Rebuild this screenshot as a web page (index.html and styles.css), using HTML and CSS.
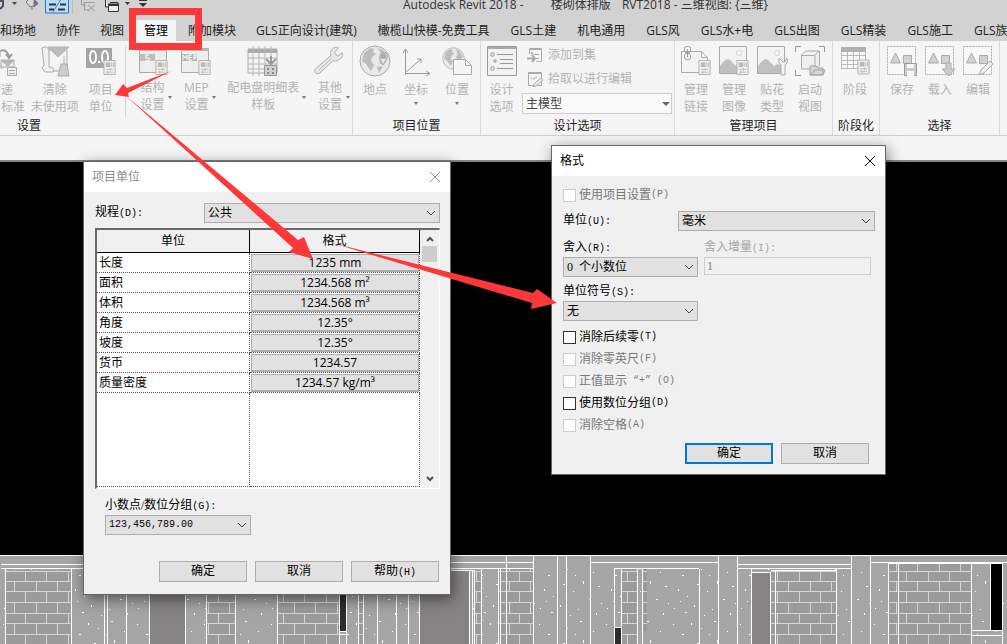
FILE: index.html
```html
<!DOCTYPE html>
<html lang="zh-CN">
<head>
<meta charset="utf-8">
<title>Autodesk Revit 2018</title>
<link rel="stylesheet" href="styles.css">
</head>
<body>
<svg class="defs" aria-hidden="true">
  <defs>
    <symbol id="card" viewBox="0 0 14 17">
      <path d="M1 1h12v15H1z" fill="#f3f3f3" stroke="#ababab"/>
      <path d="M3 3h5v5H3z" fill="#b9b9b9"/><path d="M9.500 3v5M11.500 3v5M3 10.500h8M3 13.500h8M8 9v3M5 12v3" stroke="#b5b5b5" fill="none"/>
    </symbol>
    <symbol id="sel" viewBox="0 0 32 32">
      <path d="M1.500 1.500h28v28h-28z" fill="#f8f8f8" stroke="#aaa" stroke-dasharray="2 1"/>
      <path d="M9.500 8l5 10h-10z" fill="#d2d2d2" stroke="#aaa"/><path d="M17.500 10.500h8v8h-8z" fill="#d2d2d2" stroke="#aaa"/>
    </symbol>
    <symbol id="globe" viewBox="0 0 32 32">
      <circle cx="16" cy="16" r="15" fill="#e9e9e9" stroke="#a8a8a8"/>
      <path d="M5 8l6-5 4 1-1 3 3 2-4 3-1 4 3 4-3 6-5-7-4-3zM19 3l5 2 5 8-4 7-4-1-1-6 2-4zM18 22l6-1-4 7z" fill="#bcbcbc"/>
    </symbol>
    <symbol id="picture" viewBox="0 0 32 32">
      <path d="M1.500 1.500h27v27h-27z" fill="#f3f3f3" stroke="#aaa"/><circle cx="21" cy="8" r="2.500" fill="#fff" stroke="#ccc"/>
      <path d="M2 21q6-9 10-6l6 6 4-2 6 4v5H2z" fill="#c0c0c0"/>
    </symbol>
    <symbol id="wrench" viewBox="0 0 32 32">
      <path d="M2 24L18 10Q16 3 24 1l2 1-4 5 3 4 5-4q2 7-7 9h-3L6 29q-3 2-5-1-1-2 1-4z" fill="#e7e7e7" stroke="#a8a8a8"/><path d="M5 26L19 13" stroke="#bbb"/>
    </symbol>
  </defs>
</svg>

<div class="app">
  <header class="titlebar">
    <div class="quick">
      <svg width="152" height="15" viewBox="0 0 152 15" fill="none" stroke="#777">
        <path d="M0 1h3v5L0 9" stroke="#4b5060" stroke-width="2"/><path d="M12 2h5l-2.500 3z" fill="#444" stroke="none"/>
        <path d="M26 2l3-3h5l4 5-4 2-4 1z" fill="#d9d9d9"/><path d="M34 0l4 3-4 4z" fill="#777"/><path d="M32 7v3"/>
        <path d="M45.500-1v14h23v-14" fill="#b9dcfb" stroke="#2076c8"/><path d="M49 4.500h7M60 4.500h6M49 9.500h5M58 9.500h7" stroke="#333" stroke-width="2"/><path d="M53 12l8-13" stroke="#3487cd"/>
        <path d="M72.500 0v14" stroke="#bbb"/><path d="M81.500 0v5h4M84.500 2.500h10M84.500 2v8h4M88 5l7 6M95 5l-7 6" stroke="#999"/>
        <path d="M105.500 0v7h3M110 2.500h8v3M108.500 5.500h10v6h-10z" fill="#eee" stroke="#333"/><path d="M108 4.500h11" stroke="#333" stroke-width="2"/><path d="M125 2h5l-2.500 3zM139 3h8l-4 4z" fill="#333" stroke="none"/><path d="M139 .500h8" stroke="#333"/>
      </svg>
    </div>
    <h1>Autodesk Revit 2018 - <span>楼砌体排版</span> <span>RVT2018 - 三维视图: {三维}</span></h1>
  </header>
  <nav class="tabs">
    <button>和场地</button><button>协作</button><button>视图</button><button class="active">管理</button><button>附加模块</button><button>GLS正向设计(建筑)</button><button>橄榄山快模-免费工具</button><button>GLS土建</button><button>机电通用</button><button>GLS风</button><button>GLS水+电</button><button>GLS出图</button><button>GLS精装</button><button>GLS施工</button><button>GLS族</button>
  </nav>

  <main class="ribbon">
    <section class="panel settings">
      <div class="tools">
        <button class="tool wide"><svg width="32" height="32"><path d="M12 8q9-7 12 4M21 9l3 4 3-4" fill="none" stroke="#999" stroke-width="2"/><path d="M8 5h7v7H8zM16 15h13v7H16z" fill="#ececec" stroke="#aaa"/><path d="M17 16h11l-5 5zM11 15l6 9" fill="#bbb" stroke="#aaa"/><path d="M22.500 22.500h9v8h-9zM24 25.500h6M24 28.500h6" fill="#eee" stroke="#aaa"/></svg><span>传递<br>项目标准</span></button>
        <button class="tool wide"><svg width="32" height="32"><path d="M3 3q5-3 7 2v17q6 0 4 5H6l-3-4 2-3zM9 5h12M28 5v21H14" fill="#f1f1f1" stroke="#aaa"/><path d="M9 2h21L19 12zM25 11v8" fill="#bdbdbd" stroke="#b0b0b0"/><path d="M22 19h6l2 12H19z" fill="#ccc" stroke="#aaa"/></svg><span>清除<br>未使用项</span></button>
        <button class="tool"><svg width="32" height="32"><path d="M1 3h26v20H1z" fill="#a5a5a5"/><g fill="none" stroke="#fff" stroke-width="2"><ellipse cx="8" cy="12" rx="3" ry="6"/><path d="M13 17h2"/><ellipse cx="20" cy="12" rx="3" ry="6"/></g><use href="#card" x="18" y="14" width="13" height="17"/></svg><span>项目<br>单位</span></button>
        <i class="rule"></i>
        <button class="tool menu mid"><svg width="32" height="32"><path d="M2.500 3.500h27v24h-27z" fill="#eee" stroke="#aaa"/><path d="M2 3h28v3H2zM3 9h15v7H3z" fill="#bdbdbd"/><path d="M12 10H9v3h3v3H8" fill="none" stroke="#fff"/><use href="#card" x="18" y="14" width="13" height="17"/></svg><span>结构<br>设置</span></button>
        <button class="tool menu mid"><svg width="32" height="32"><path d="M1.500 3.500h27v24h-27z" fill="#eee" stroke="#aaa"/><path d="M1 3h28v3H1zM2 9h15v7H2z" fill="#b5b5b5"/><path d="M3 15v-5l2 3 2-3v5M12 10H9v5h3M9 12.500h3M14 15v-5h2v3h-2" fill="none" stroke="#fff"/><use href="#card" x="18" y="14" width="13" height="17"/></svg><span>MEP<br>设置</span></button>
        <button class="tool menu schedule"><svg width="34" height="32"><path d="M2 4h29v24H2z" fill="#f4f4f4" stroke="#aaa"/><path d="M2 4h29v4H2z" fill="#aaa"/><path d="M2 13h29M2 19h29M2 24h29M7 1v30M13 1v30M19 1v30M25 1v30" stroke="#b5b5b5"/><path d="M18.500 20.500h12v10h-12z" fill="#d0d0d0" stroke="#999"/><path d="M21 23h2v2h-2zM26 23h2v2h-2zM21 27h2v2h-2zM26 27h2v2h-2z" fill="#888"/><path d="M25 11v8M20 14l5 5 5-5" fill="none" stroke="#999" stroke-width="2"/></svg><span>配电盘明细表<br>样板</span></button>
        <button class="tool menu mid"><svg width="32" height="32"><use href="#wrench" x="0" y="1" width="30" height="30"/></svg><span>其他<br>设置</span></button>
      </div>
      <h2>设置</h2>
    </section>
    <section class="panel location">
      <div class="tools">
        <button class="tool mid"><svg width="32" height="32"><use href="#globe" width="32" height="32"/><path d="M24 20l-3-7q-1-5 4-6 5 1 3 6z" fill="#eee" stroke="#aaa"/><circle cx="24.500" cy="11" r="3" fill="#aaa"/></svg><span>地点</span></button>
        <button class="tool menu single"><svg width="32" height="32"><path d="M5.500 30V5M3 8l2.500-4L8 8M5 28.500h25M26 26l4 2.500-4 2.500M5 28l16-14M17 14h4v4" fill="none" stroke="#999"/></svg><span>坐标</span></button>
        <button class="tool menu single mid"><svg width="32" height="32"><use href="#globe" x="1" y="2" width="23" height="23"/><path d="M12.500 14.500h12l6 6v9h-18zM24.500 14.500v6h6" fill="#f5f5f5" stroke="#aaa"/></svg><span>位置</span></button>
      </div>
      <h2>项目位置</h2>
    </section>
    <section class="panel options">
      <div class="tools">
        <button class="tool mid"><svg width="32" height="32"><path d="M1.500 1.500h29v29h-29z" fill="#f2f2f2" stroke="#999"/><path d="M2 3h28" stroke="#aaa" stroke-width="2"/><path d="M5 8h3v3H5zM5 22h3v3H5zM8 15h2v2H8z" fill="#fff" stroke="#999"/><path d="M11 9.500h16M14 14.500h13M14 18.500h13M11 23.500h16" stroke="#999"/></svg><span>设计<br>选项</span></button>
        <div class="stack">
          <button class="line"><svg width="16" height="16"><path d="M2.500 1.500h12v13h-5M2 2.500h12M2.500 2v5M7 7.500h5M8 11.500h4" fill="none" stroke="#aaa"/><path d="M4 5h2v2H4z" fill="#aaa"/><path d="M0 11.500h7M5 8l3 3.500L5 15" fill="none" stroke="#aaa" stroke-width="2"/></svg>添加到集</button>
          <button class="line"><svg width="16" height="16"><path d="M1.500 1.500h13v13h-13zM1 2.500h13M4 6.500l2 2 4-3" fill="none" stroke="#aaa"/><path d="M7 13l7-6 2 2-7 6-3 1z" fill="#eee" stroke="#aaa"/></svg>拾取以进行编辑</button>
          <div class="pick model"><select aria-label="设计选项"><option>主模型</option></select><svg width="8" height="4"><path d="M0 0h8L4 4z" fill="#666"/></svg></div>
        </div>
      </div>
      <h2>设计选项</h2>
    </section>
    <section class="panel manage">
      <div class="tools">
        <button class="tool"><svg width="32" height="32"><path d="M1.500 6.500h20l6 6v15h-26zM21.500 6.500v6h6" fill="#f3f3f3" stroke="#aaa"/><g fill="none" stroke="#999"><rect x="4.500" y="1.500" width="6" height="6" rx="2"/><rect x="4.500" y="8.500" width="6" height="6" rx="2"/><path d="M7.500 4v8"/></g><use href="#card" x="18" y="14" width="13" height="17"/></svg><span>管理<br>链接</span></button>
        <button class="tool"><svg width="32" height="32"><use href="#picture" width="32" height="32"/><use href="#card" x="18" y="14" width="13" height="17"/></svg><span>管理<br>图像</span></button>
        <button class="tool"><svg width="32" height="32"><use href="#picture" width="32" height="32"/><path d="M23 13v5l2 2v10h4V20l3-3-1-4-2 4h-2z" fill="#f4f4f4" stroke="#aaa"/></svg><span>贴花<br>类型</span></button>
        <button class="tool"><svg width="32" height="32"><path d="M1.500 7V1.500H7M25 1.500h5.500V7M1.500 25v5.500H7" fill="none" stroke="#999"/><path d="M7.500 10l4-4h14v14l-4 4h-14zM8 10.500h13v13M21 10l4-4" fill="#f0f0f0" stroke="#aaa"/><path d="M16 21h6l2 2h5v7H16zM16 30l5-5h10l-2 5z" fill="#d5d5d5" stroke="#a5a5a5"/></svg><span>启动<br>视图</span></button>
      </div>
      <h2>管理项目</h2>
    </section>
    <section class="panel phase">
      <div class="tools">
        <button class="tool mid"><svg width="32" height="32"><path d="M2.500 3.500h24v20h-24zM2 10.500h24M2 15.500h24M2 19.500h24M8.500 7v16M14.500 7v16M20.500 7v16" fill="#f7f7f7" stroke="#bbb"/><path d="M2 2h25v5H2z" fill="#b0b0b0"/><use href="#card" x="18" y="13" width="13" height="18"/></svg><span>阶段</span></button>
      </div>
      <h2>阶段化</h2>
    </section>
    <section class="panel select">
      <div class="tools">
        <button class="tool"><svg width="32" height="32"><use href="#sel" width="32" height="32"/><path d="M18.500 18.500h12v12h-12z" fill="#ccc" stroke="#999"/><path d="M21 19h7v4h-7zM21 26h7v5h-7z" fill="#f8f8f8"/></svg><span>保存</span></button>
        <button class="tool"><svg width="32" height="32"><use href="#sel" width="32" height="32"/><path d="M22 18h5v6h4l-6 7-7-7h4z" fill="#ccc" stroke="#aaa"/></svg><span>载入</span></button>
        <button class="tool"><svg width="32" height="32"><use href="#sel" width="32" height="32"/><path d="M17 30l2-5 9-9 3 3-9 9z" fill="#ececec" stroke="#aaa"/></svg><span>编辑</span></button>
      </div>
      <h2>选择</h2>
    </section>
  </main>
  <div class="optionbar"></div>

  <div class="canvas">
    <svg class="wall" viewBox="0 555 1007 89" preserveAspectRatio="xMinYMin slice">
      <defs>
        <pattern id="brick" x="3" y="571" width="43" height="63" patternUnits="userSpaceOnUse">
          <path d="M0 0h43v63H0z" fill="#9b9b9b"/>
          <path d="M0 .500h43M0 10.500h43M0 20.500h43M0 31.500h43M0 42.500h43M0 52.500h43M.500 0v10M22.500 0v10M11.500 10v10M33.500 10v10M.500 20v11M22.500 20v11M11.500 31v11M33.500 31v11M.500 42v10M22.500 42v10M11.500 52v11M33.500 52v11" stroke="#d6d6d6"/>
        </pattern>
        <pattern id="grit" x="0" y="560" width="67" height="59" patternUnits="userSpaceOnUse">
          <path d="M3 5h1v1H3zM12 15h2v1h-2zM21 4h1v2h-1zM31 9h1v1h-1zM44 2h2v1h-2zM57 12h1v1h-1zM62 26h2v1h-2zM8 29h1v2H8zM17 36h1v1h-1zM27 24h2v1h-2zM37 31h1v1h-1zM47 21h1v3h-1zM53 39h2v1h-2zM4 48h1v1H4zM15 52h2v1h-2zM24 45h1v2h-1zM34 55h1v1h-1zM42 49h1v1h-1zM60 53h1v2h-1zM10 41h1v1h-1zM65 43h1v1h-1zM39 15h1v1h-1z" fill="#fff"/>
        </pattern>
      </defs>
      <path d="M0 555h1007v89H0z" fill="#a5a5a5"/>
      <path d="M0 569h1007v75H0z" fill="url(#grit)"/>
      <path d="M5 570h66v74H5zM207 570h28v74h-28zM278 570h61v74h-61zM359 570h4v74h-4zM475 570h6v74h-6zM499 569h34v75h-34zM622 569h15v75h-15zM643 569h4v62h-4zM771 570h65v74h-65zM888 563h83v81h-83z" fill="url(#brick)"/>
      <path d="M150 570h35v74h-35zM420 570h49v74h-49zM752 572h18v72h-18z" fill="#868384"/>
      <path d="M340 570h6v61h-6zM615 628h6v16h-6z" fill="#2c2c2c"/><path d="M991 564h11v66h-11z" fill="#000"/>
      <path d="M0 555.500h1007M1 564.500h84M1 568.500h84M450 562.500h83M450 568.500h83M450 570.500h24M590 562.500h128M614 568.500h85M737 564.500h114M737 568.500h114M771 570.500h65M751 572.500h19M870 562.500h137M888 563.500h114M972 630.500h30M972 635.500h30M340 631.500h6M340 634.500h6M614 627.500h7M5.500 569v75M71.500 569v75M104.500 569v75M107.500 569v75M126.500 569v75M149.500 569v75M185.500 569v75M206.500 569v75M235.500 569v75M277.500 569v75M339.500 569v75M346.500 569v75M358.500 569v75M363.500 569v75M377.500 569v75M396.500 569v75M408.500 569v75M419.500 569v75M469.500 570v74M472.500 570v74M474.500 570v74M481.500 569v75M498.500 569v75M500.500 569v75M506.500 555v89M533.500 555v89M557.500 555v89M566.500 555v89M590.500 555v89M614.500 569v75M621.500 569v75M637.500 569v75M642.500 569v75M699.500 569v75M718.500 555v89M737.500 555v89M751.500 569v75M770.500 572v72M775.500 570v74M836.500 569v75M851.500 555v89M870.500 555v89M888.500 563v81M898.500 563v81M971.500 563v81M990.500 563v67M1002.500 563v81" fill="none" stroke="#fff"/>
    </svg>
  </div>
</div>

<section class="dialog units" aria-label="项目单位">
  <header><h3>项目单位</h3><button class="close" aria-label="关闭"><svg width="12" height="12"><path d="M1 1l10 10M11 1L1 11" stroke="currentColor"/></svg></button></header>
  <div class="body">
    <div class="row discipline">
      <label for="disc">规程<span class="key">(D):</span></label>
      <div class="pick"><select id="disc"><option>公共</option></select><svg width="10" height="6"><path d="M1 1l4 4 4-4" fill="none" stroke="#444"/></svg></div>
    </div>
    <div class="grid">
      <table>
        <thead><tr><th>单位</th><th>格式</th></tr></thead>
        <tbody>
          <tr><td>长度</td><td><button>1235 mm</button></td></tr>
          <tr><td>面积</td><td><button>1234.568 m²</button></td></tr>
          <tr><td>体积</td><td><button>1234.568 m³</button></td></tr>
          <tr><td>角度</td><td><button>12.35°</button></td></tr>
          <tr><td>坡度</td><td><button>12.35°</button></td></tr>
          <tr><td>货币</td><td><button>1234.57</button></td></tr>
          <tr><td>质量密度</td><td><button>1234.57 kg/m³</button></td></tr>
          <tr class="blank"><td></td><td></td></tr>
        </tbody>
      </table>
      <div class="scroll"><svg width="8" height="6"><path d="M1 5l3-3 3 3" fill="none" stroke="#505050" stroke-width="2"/></svg><i></i><svg width="8" height="6"><path d="M1 1l3 3 3-3" fill="none" stroke="#505050" stroke-width="2"/></svg></div>
    </div>
    <div class="grouping">
      <label for="grp">小数点/数位分组<span class="key">(G):</span></label>
      <div class="pick digits"><select id="grp"><option>123,456,789.00</option></select><svg width="10" height="6"><path d="M1 1l4 4 4-4" fill="none" stroke="#444"/></svg></div>
    </div>
    <footer><button class="push">确定</button><button class="push">取消</button><button class="push">帮助<span class="key">(H)</span></button></footer>
  </div>
</section>

<section class="dialog format" aria-label="格式">
  <header><h3>格式</h3><button class="close" aria-label="关闭"><svg width="12" height="12"><path d="M1 1l10 10M11 1L1 11" stroke="currentColor"/></svg></button></header>
  <div class="body">
    <label class="check off"><input type="checkbox" disabled>使用项目设置<span class="key">(P)</span></label>
    <div class="row unit">
      <label for="unit">单位<span class="key">(U):</span></label>
      <div class="pick"><select id="unit"><option>毫米</option></select><svg width="10" height="6"><path d="M1 1l4 4 4-4" fill="none" stroke="#444"/></svg></div>
    </div>
    <div class="pair">
      <div class="field">
        <label for="round">舍入<span class="key">(R):</span></label>
        <div class="pick"><select id="round"><option>0&nbsp; 个小数位</option></select><svg width="10" height="6"><path d="M1 1l4 4 4-4" fill="none" stroke="#444"/></svg></div>
      </div>
      <div class="field off">
        <label for="inc">舍入增量<span class="key">(I):</span></label>
        <input id="inc" type="text" value="1" disabled>
      </div>
      <div class="field">
        <label for="sym">单位符号<span class="key">(S):</span></label>
        <div class="pick"><select id="sym"><option>无</option></select><svg width="10" height="6"><path d="M1 1l4 4 4-4" fill="none" stroke="#444"/></svg></div>
      </div>
    </div>
    <div class="checks">
      <label class="check"><input type="checkbox">消除后续零<span class="key">(T)</span></label>
      <label class="check off"><input type="checkbox" disabled>消除零英尺<span class="key">(F)</span></label>
      <label class="check off"><input type="checkbox" disabled>正值显示<span class="key"> “+” (O)</span></label>
      <label class="check"><input type="checkbox">使用数位分组<span class="key">(D)</span></label>
      <label class="check off"><input type="checkbox" disabled>消除空格<span class="key">(A)</span></label>
    </div>
    <footer><button class="push default">确定</button><button class="push">取消</button></footer>
  </div>
</section>

<svg class="marks" width="1007" height="644" aria-hidden="true">
  <path d="M132.500 11.500h66v35h-66z" fill="none" stroke="#fe3838" stroke-width="7"/>
  <path d="M171 71L127 88l-4-4-8 11 14 2-1-4zM125 95l173 145 6-3 9 22-24-7 4-4zM332 243l201 50 4-4 20 14-26 6 1-6z" fill="#fe3838"/>
</svg>
</body>
</html>
```

FILE: styles.css
```css
* { box-sizing: border-box; }

body {
  margin: 0;
  height: 100vh;
  overflow: hidden;
  position: relative;
  font: 12px/16px "Open Sans", "Noto Sans CJK SC", sans-serif;
  color: #222;
}

button, select, input { font: inherit; color: inherit; margin: 0; }
button { padding: 0; border: 0; background: none; }
h1, h2, h3 { margin: 0; font-size: 12px; font-weight: 400; }
svg { display: block; flex: none; }
.defs { position: absolute; width: 0; height: 0; }

.app { height: 100%; display: flex; flex-direction: column; background: #f5f5f5; }

/* Title bar and tabs */
.titlebar { display: flex; height: 20px; background: #d2d2d2; }
.quick { flex: 0 0 403px; }
.titlebar h1 { line-height: 10px; white-space: nowrap; color: #333; }
.titlebar h1 span { margin-left: 24px; }
.titlebar h1 span + span { margin-left: 8px; }

.tabs { display: flex; height: 21px; background: #d2d2d2; overflow: hidden; }
.tabs button { flex: none; padding: 0 10px; line-height: 21px; white-space: nowrap; }
.tabs button:first-child { padding-left: 0; }
.tabs button:nth-child(n+6) { margin-right: 1px; }
.tabs .active { background: #f5f5f5; padding: 0 8px; margin: 0 2px; color: #000; }

/* Ribbon */
.ribbon { display: flex; height: 95px; border-bottom: 1px solid #cfcfcf; overflow: hidden; }
.panel { flex: none; display: flex; flex-direction: column; border-right: 1px solid #d9d9d9; }
.panel h2 { line-height: 18px; text-align: center; }
.tools { display: flex; height: 76px; padding-top: 4px; }
.tool { position: relative; width: 38px; display: flex; flex-direction: column; justify-content: flex-start; align-items: center; color: #b2b2b2; line-height: 17px; white-space: nowrap; gap: 4px; }
.tool.mid { width: 44px; }
.tool.wide { width: 54px; }
.tool.schedule { width: 90px; }
.tool.menu:not(.single) { gap: 2px; }
.tool.menu::after { content: ""; position: absolute; right: 2px; top: 51px; border: 2px solid transparent; border-top: 3px solid #777; border-bottom: 0; }
.tool.single::after { right: 45%; top: 57px; }
.rule { width: 1px; margin: 0 5px; background: #d0d0d0; }
.settings { margin-left: -26px; width: 379px; }
.settings h2 { text-align: left; padding-left: 43px; }
.location { width: 128px; }
.options { width: 194px; }
.manage { width: 158px; }
.manage .tools { padding-left: 2px; }
.phase { width: 47px; }
.select { width: 120px; }
.select .tools { padding-left: 3px; }

.stack { flex: none; width: 150px; display: flex; flex-direction: column; }
.options .tool { width: 41px; }
.line { display: flex; align-items: center; gap: 5px; height: 24px; padding: 0 0 4px 5px; color: #b2b2b2; }
.pick { display: grid; align-items: center; }
.pick > * { grid-area: 1 / 1; }
.pick svg { justify-self: end; margin-right: 4px; pointer-events: none; }
.pick select { appearance: none; width: 100%; height: 20px; border: 1px solid #adadad; border-radius: 0; background: #e1e1e1; padding: 0 18px 0 3px; line-height: 16px; }
.pick.model select { height: 21px; background: #f9f9f9; border-color: #ccc; color: #444; }
.pick.model svg { margin-right: 2px; }

.optionbar { height: 26px; border-bottom: 2px solid #858585; }

/* Model view */
.canvas { flex: 1; display: flex; align-items: flex-end; background: #000; overflow: hidden; }
.wall { width: 100%; height: 89px; }

/* Dialogs */
.dialog { position: absolute; background: #f0f0f0; border: 1px solid #666; color: #000; font-family: "Liberation Serif", "Noto Sans CJK SC", serif; box-shadow: 2px 4px 14px rgba(0, 0, 0, .5); }
.dialog header { display: flex; justify-content: space-between; align-items: center; height: 30px; padding: 0 9px 0 8px; background: #fff; }
.key { font: 10px/16px "Liberation Mono", monospace; white-space: pre; }
.row { display: flex; align-items: center; justify-content: space-between; }
.dialog footer { display: flex; justify-content: flex-end; gap: 8px; }
.push { width: 88px; height: 21px; border: 1px solid #adadad; background: #e1e1e1; line-height: 19px; }
.push.default { border: 2px solid #0078d7; line-height: 17px; }

.units { left: 83px; top: 161px; width: 368px; }
.units header { color: #8c8c8c; }
.units .body { padding: 11px 10px 12px 11px; }
.units .discipline .pick { width: 236px; }
.grid { display: flex; height: 261px; margin-top: 5px; background: #fff; border: 2px solid #696969; border-right: 1px solid #fff; border-bottom: 1px solid #fff; }
.grid table { flex: 1; height: 257px; table-layout: fixed; border-collapse: separate; border-spacing: 0; }
.grid th { height: 23px; padding: 0; background: #f0f0f0; border-right: 1px solid #000; border-bottom: 1px solid #000; font-weight: 400; }
.grid th:first-child { width: 153px; }
.grid td { height: 20px; padding: 0 0 0 2px; line-height: 18px; border-right: 1px dotted #555; border-bottom: 1px dotted #555; }
.grid td + td { padding: 0 0 0 1px; }
.grid .blank td { height: auto; }
.grid td button { display: block; width: 100%; height: 18px; border: 1px solid #adadad; border-bottom-width: 2px; background: #e1e1e1; font: 12px/15px "Open Sans", "Noto Sans CJK SC", sans-serif; }
.scroll { flex: 0 0 19px; display: flex; flex-direction: column; align-items: center; gap: 4px; padding: 6px 0; background: #f0f0f0; }
.scroll i { width: 15px; height: 16px; background: #cdcdcd; margin-bottom: auto; }
.grouping { padding: 8px 10px 0; }
.grouping label { display: block; }
.grouping .pick { width: 146px; }
.pick.digits select { font: 10px/16px "Liberation Mono", monospace; }
.units footer { margin-top: 26px; padding-right: 1px; }

.format { left: 551px; top: 145px; width: 335px; }
.format .body { padding: 11px 10px 10px 11px; }
.check { display: flex; align-items: center; height: 16px; }
.check input { appearance: none; width: 13px; height: 13px; margin-right: 3px; border: 1px solid #333; background: #fff; }
.check.off { color: #777; }
.check.off input { border-color: #ccc; }
.unit { margin-top: 8px; }
.unit .pick { width: 197px; }
.pair { display: grid; grid-template-columns: 135px 167px; gap: 6px; margin-top: 8px; }
.field label { display: block; }
.field.off { color: #a5a5a5; }
.field input { display: block; width: 100%; height: 18px; border: 1px solid #ccc; background: #f0f0f0; padding: 0 2px; color: #777; }
.checks { display: flex; flex-direction: column; gap: 6px; margin-top: 8px; }
.format footer { margin-top: 10px; padding-right: 6px; }

.marks { position: absolute; left: 0; top: 0; pointer-events: none; }
```
